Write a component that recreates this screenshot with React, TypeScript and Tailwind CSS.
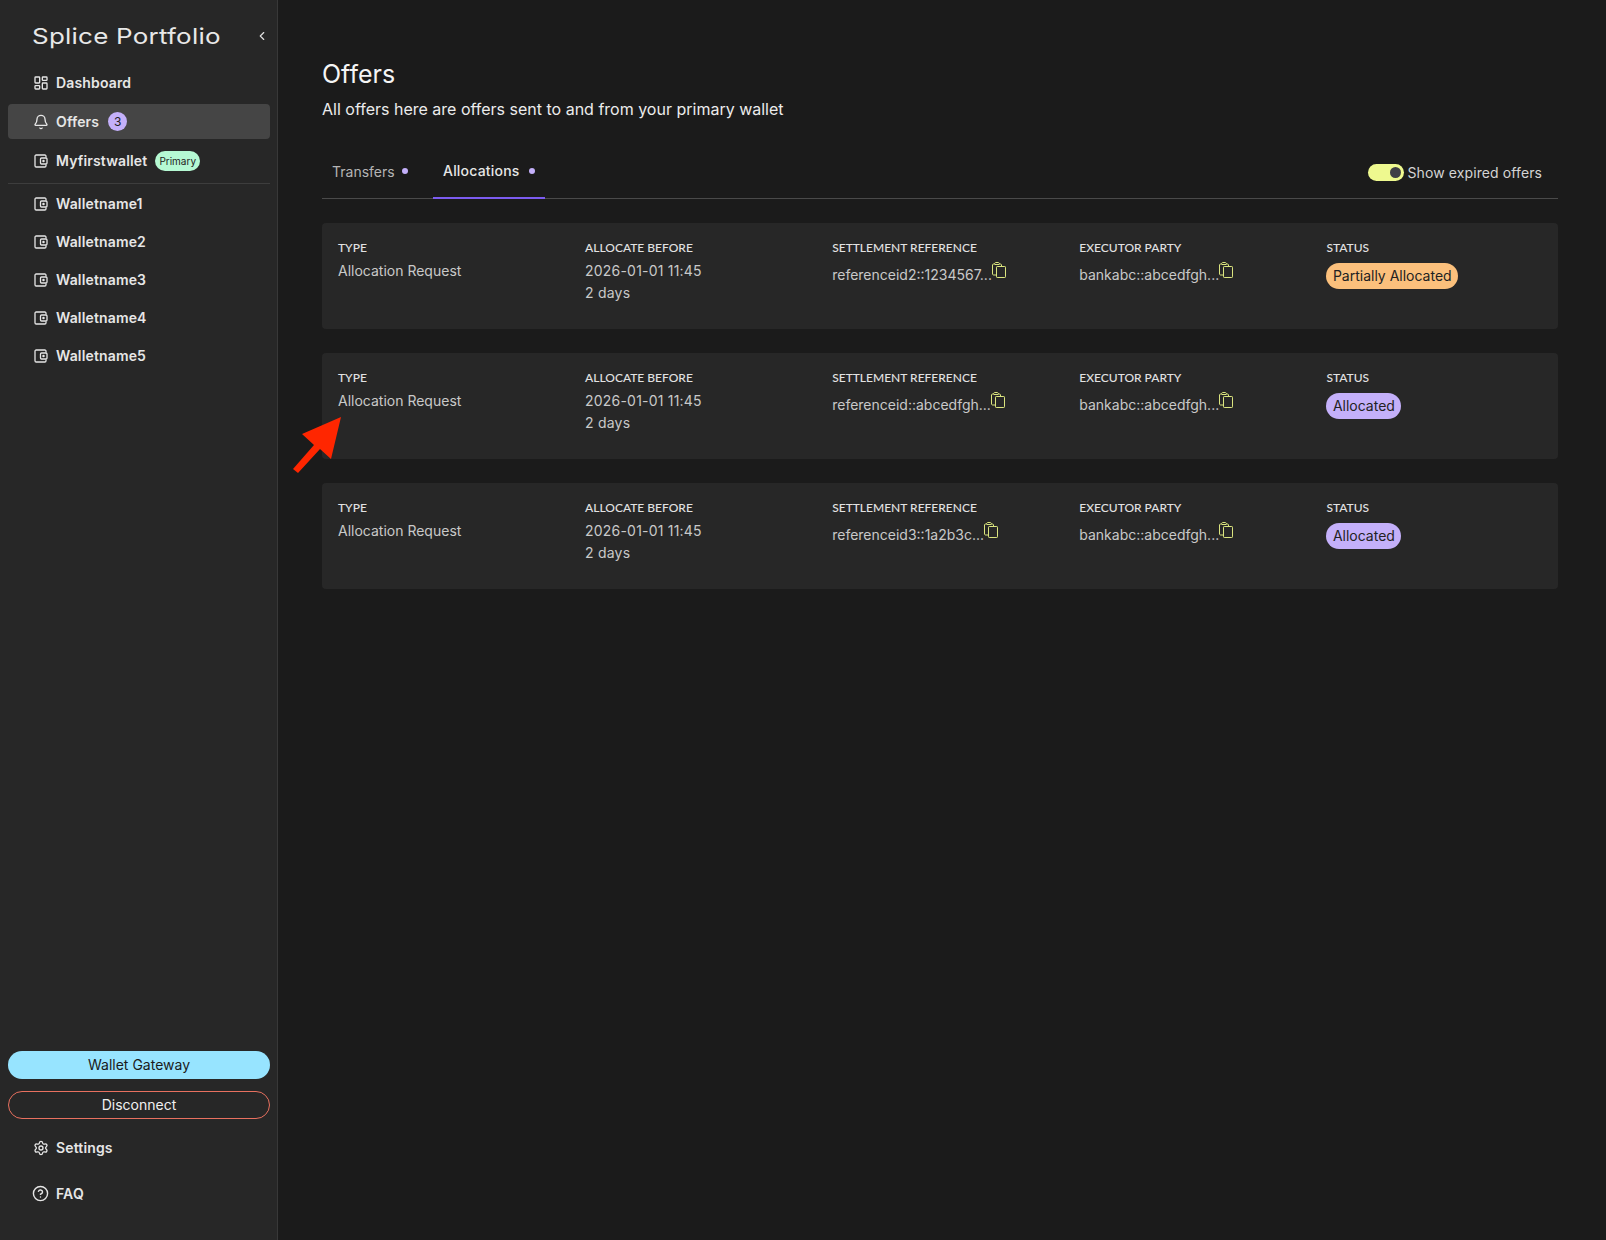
import { Bell, ChevronLeft, CircleHelp, LayoutDashboard, Settings } from "lucide-react";
import type { ReactNode } from "react";

const inter = "font-['Inter',sans-serif]";

function WalletIcon() {
  return (
    <svg width="14" height="14" viewBox="0 0 14 14" fill="none" stroke="currentColor" strokeWidth="1.3" className="shrink-0">
      <path d="M12 3.5V2.2C12 1.5 11.5 1 10.8 1H2.2C1.5 1 1 1.5 1 2.2V11.8C1 12.5 1.5 13 2.2 13H10.8C11.5 13 12 12.5 12 11.8V10.5" />
      <rect x="6.5" y="4" width="6.5" height="6" rx="1" />
      <circle cx="9.5" cy="7" r="0.6" fill="currentColor" />
    </svg>
  );
}

function CopyIcon() {
  return (
    <svg width="14" height="16" viewBox="0 0 14 16" fill="none" stroke="#dbe57f" strokeWidth="1" className="shrink-0">
      <path d="M4.5 13H1.5C1 13 .5 12.5 .5 12V3C.5 2.4 1 2 1.5 2H2.5C2.5 1 3.2.5 4 .5H6C6.8.5 7.5 1 7.5 2H8.5C9 2 9.5 2.4 9.5 3V4.5" />
      <path d="M2.5 2.5H7.5" />
      <rect x="4.5" y="4.5" width="9" height="11" rx="0.7" />
    </svg>
  );
}

function NavItem({ icon, active, children, className }: { icon: ReactNode; active?: boolean; children: ReactNode; className?: string }) {
  return (
    <div
      className={`flex h-[35px] items-center gap-[9px] rounded-[4px] pl-[26px] text-[14px] font-semibold tracking-[0.15px] text-[#e6e6e6] ${
        active ? "bg-[#454545]" : ""
      } ${className ?? ""}`}
    >
      <span className="flex w-[13px] justify-center">{icon}</span>
      {children}
    </div>
  );
}

function Label({ children }: { children: ReactNode }) {
  return <div className="font-['Lato',sans-serif] text-[12px] leading-[18px] font-medium text-[#e2e2e2]">{children}</div>;
}

function Reference({ text }: { text: string }) {
  return (
    <div className="flex items-start pt-[5px]">
      <span className="mt-[2px] text-[14px] leading-[22px] text-[#c9c9c9]">{text}</span>
      <CopyIcon />
    </div>
  );
}

const offers = [
  { reference: "referenceid2::1234567...", status: "Partially Allocated", badge: "bg-[#fbc07c]" },
  { reference: "referenceid::abcedfgh...", status: "Allocated", badge: "bg-[#c4b0fa]" },
  { reference: "referenceid3::1a2b3c...", status: "Allocated", badge: "bg-[#c4b0fa]" },
];

const wallets = ["Walletname1", "Walletname2", "Walletname3", "Walletname4", "Walletname5"];

export default function App() {
  return (
    <div className={`relative flex min-h-screen bg-[#1b1b1b] ${inter}`}>
      {/* Sidebar */}
      <aside className="flex w-[278px] shrink-0 flex-col border-r border-[#383838] bg-[#272727] pr-[7px] pl-[8px]">
        <div className="flex h-[65px] items-center justify-between pt-[7px] pr-[1px] pl-[24px]">
          <span className="origin-left scale-x-[1.18] text-[22px] font-normal tracking-[0.2px] text-[#e8e8e8]">
            Splice Portfolio
          </span>
          <ChevronLeft className="h-[14px] w-[14px] text-[#e0e0e0]" />
        </div>

        <nav className="flex flex-col gap-[3px]">
          <NavItem icon={<LayoutDashboard className="h-[16px] w-[16px] shrink-0" />}>Dashboard</NavItem>
          <NavItem active className="mt-[1px]" icon={<Bell className="h-[16px] w-[16px] shrink-0" />}>
            Offers
            <span className="flex h-[19px] w-[19px] items-center justify-center rounded-full bg-[#c4b0fa] text-[12px] font-normal text-[#222]">
              3
            </span>
          </NavItem>
          <NavItem className="mt-[1px]" icon={<WalletIcon />}>
            Myfirstwallet
            <span className="-ml-[1px] rounded-full bg-[#b5f9d3] px-[4px] text-[10px] leading-[20px] font-normal tracking-normal text-[#222]">
              Primary
            </span>
          </NavItem>
          <div className="mt-[2px] -mb-[1px] h-px bg-[#3d3d3d]" />
          {wallets.map((name) => (
            <NavItem key={name} icon={<WalletIcon />}>
              {name}
            </NavItem>
          ))}
        </nav>

        <div className="mt-auto flex flex-col pb-[29px]">
          <button className="h-[28px] rounded-full bg-[#97e4ff] pb-[1px] text-[14px] text-[#1b1b1b]">
            Wallet Gateway
          </button>
          <button className="mt-[12px] h-[28px] rounded-full border border-[#e8705f] pb-[1px] text-[14px] text-[#f0f0f0]">
            Disconnect
          </button>
          <NavItem className="mt-[11px]" icon={<Settings className="h-[16px] w-[16px] shrink-0" />}>
            Settings
          </NavItem>
          <NavItem className="mt-[11px]" icon={<CircleHelp className="h-[17px] w-[17px] shrink-0" />}>
            FAQ
          </NavItem>
        </div>
      </aside>

      {/* Main */}
      <main className="flex-1 pt-[58px] pr-[48px] pl-[44px]">
        <h1 className="text-[25px] leading-[32px] text-[#f5f5f5]">Offers</h1>
        <p className="mt-[7px] text-[16px] leading-[24px] text-[#ececec]">
          All offers here are offers sent to and from your primary wallet
        </p>

        <div className="mt-[25px] flex items-center justify-between border-b border-[#4a4a4a]">
          <div className="flex">
            <div className="flex h-[52px] w-[111px] items-center pb-[2px] pl-[10px] text-[14px] text-[#b5b5b5]">
              Transfers
              <span className="ml-[7px] h-[6px] w-[6px] rounded-full bg-[#c4b0fa]" />
            </div>
            <div className="-mb-px flex h-[53px] w-[112px] items-center border-b-2 border-[#7c5cf0] pb-[2px] pl-[10px] text-[14px] font-medium tracking-[0.2px] text-[#e6e6e6]">
              Allocations
              <span className="ml-[9px] h-[6px] w-[6px] rounded-full bg-[#c4b0fa]" />
            </div>
          </div>
          <div className="flex items-center gap-[4px] pr-[16px] text-[14px] tracking-[0.1px] text-[#d4d4d4]">
            <span className="flex h-[17px] w-[36px] items-center justify-end rounded-full bg-[#eef98f] pr-[3px]">
              <span className="h-[11px] w-[11px] rounded-full bg-[#3f3f46]" />
            </span>
            Show expired offers
          </div>
        </div>

        <div className="mt-[24px] flex flex-col gap-[24px]">
          {offers.map((offer) => (
            <div
              key={offer.reference}
              className="grid h-[106px] grid-cols-[repeat(4,247.1px)_1fr] rounded-[4px] bg-[#272727] px-[16px] pt-[16px]"
            >
              <div>
                <Label>TYPE</Label>
                <div className="mt-[3px] text-[14px] leading-[22px] text-[#c9c9c9]">Allocation Request</div>
              </div>
              <div>
                <Label>ALLOCATE BEFORE</Label>
                <div className="mt-[3px] text-[14px] leading-[22px] tracking-[0.2px] text-[#c9c9c9]">
                  2026-01-01 11:45
                  <br />2 days
                </div>
              </div>
              <div>
                <Label>SETTLEMENT REFERENCE</Label>
                <Reference text={offer.reference} />
              </div>
              <div>
                <Label>EXECUTOR PARTY</Label>
                <Reference text="bankabc::abcedfgh..." />
              </div>
              <div>
                <Label>STATUS</Label>
                <span
                  className={`mt-[6px] inline-block rounded-full px-[6.5px] text-[14px] leading-[26px] text-[#222] ${offer.badge}`}
                >
                  {offer.status}
                </span>
              </div>
            </div>
          ))}
        </div>
      </main>

      {/* Annotation arrow over the page */}
      <svg className="absolute top-[410px] left-[285px]" width="60" height="70" viewBox="285 410 60 70">
        <polygon points="341,417 302,434 314,445 293,469 298,473 320,449 331,459" fill="#ff2600" />
      </svg>
    </div>
  );
}
